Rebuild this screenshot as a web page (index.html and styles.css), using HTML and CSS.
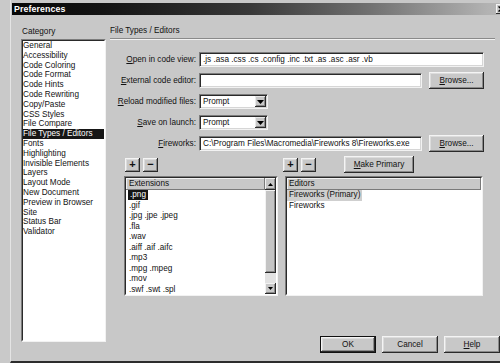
FILE: index.html
```html
<!DOCTYPE html>
<html>
<head>
<meta charset="utf-8">
<title>Preferences</title>
<link rel="stylesheet" href="styles.css">
</head>
<body>
<div class="window">
  <div class="titlebar">
    <span class="title">Preferences</span>
    <span class="close"><svg width="7" height="6" viewBox="0 0 7 6"><path d="M0.5 0.5L6.5 5.5M6.5 0.5L0.5 5.5" stroke="#000" stroke-width="1.4"/></svg></span>
  </div>
  <div class="dialog">
    <div class="left">
      <div class="cat-label">Category</div>
      <div class="sunken cat-box">
        <ul class="sunken-inner cat-list">
          <li>General</li>
          <li>Accessibility</li>
          <li>Code Coloring</li>
          <li>Code Format</li>
          <li>Code Hints</li>
          <li>Code Rewriting</li>
          <li>Copy/Paste</li>
          <li>CSS Styles</li>
          <li>File Compare</li>
          <li class="sel">File Types / Editors</li>
          <li>Fonts</li>
          <li>Highlighting</li>
          <li>Invisible Elements</li>
          <li>Layers</li>
          <li>Layout Mode</li>
          <li>New Document</li>
          <li>Preview in Browser</li>
          <li>Site</li>
          <li>Status Bar</li>
          <li>Validator</li>
        </ul>
      </div>
    </div>
    <div class="right">
      <div class="heading">File Types / Editors</div>
      <div class="form">
        <div class="row">
          <label class="lbl"><u>O</u>pen in code view:</label>
          <div class="field w-full">.js .asa .css .cs .config .inc .txt .as .asc .asr .vb</div>
        </div>
        <div class="row">
          <label class="lbl"><u>E</u>xternal code editor:</label>
          <div class="field w-mid"></div>
          <button class="btn browse"><u>B</u>rowse...</button>
        </div>
        <div class="row">
          <label class="lbl"><u>R</u>eload modified files:</label>
          <div class="field select"><span class="sel-text">Prompt</span><span class="drop"><svg width="7" height="4" viewBox="0 0 7 4"><path d="M0 0H7L3.5 4Z" fill="#000"/></svg></span></div>
        </div>
        <div class="row">
          <label class="lbl"><u>S</u>ave on launch:</label>
          <div class="field select"><span class="sel-text">Prompt</span><span class="drop"><svg width="7" height="4" viewBox="0 0 7 4"><path d="M0 0H7L3.5 4Z" fill="#000"/></svg></span></div>
        </div>
        <div class="row">
          <label class="lbl"><u>F</u>ireworks:</label>
          <div class="field w-mid">C:\Program Files\Macromedia\Fireworks 8\Fireworks.exe</div>
          <button class="btn browse"><u>B</u>rowse...</button>
        </div>
      </div>
      <div class="lists">
        <div class="col ext">
          <div class="toolbar tb-left">
            <button class="btn sq">+</button>
            <button class="btn sq">&minus;</button>
          </div>
          <div class="sunken listbox">
            <div class="sunken-inner lb-inner">
              <div class="lb-main">
                <div class="lb-head">Extensions</div>
                <ul class="lb-items">
                  <li><span class="hl-dark">.png</span></li>
                  <li>.gif</li>
                  <li>.jpg .jpe .jpeg</li>
                  <li>.fla</li>
                  <li>.wav</li>
                  <li>.aiff .aif .aifc</li>
                  <li>.mp3</li>
                  <li>.mpg .mpeg</li>
                  <li>.mov</li>
                  <li>.swf .swt .spl</li>
                </ul>
              </div>
              <div class="scrollbar">
                <div class="sb-btn sb-up"><svg width="5" height="3" viewBox="0 0 5 3"><path d="M0 3H5L2.5 0Z" fill="#000"/></svg></div>
                <div class="sb-thumb"></div>
                <div class="sb-track"></div>
                <div class="sb-btn sb-down"><svg width="5" height="3" viewBox="0 0 5 3"><path d="M0 0H5L2.5 3Z" fill="#000"/></svg></div>
              </div>
            </div>
          </div>
        </div>
        <div class="col ed">
          <div class="toolbar tb-right">
            <button class="btn sq">+</button>
            <button class="btn sq">&minus;</button>
            <button class="btn primary"><u>M</u>ake Primary</button>
          </div>
          <div class="sunken listbox">
            <div class="sunken-inner lb-inner">
              <div class="lb-main">
                <div class="lb-head ed-head">Editors</div>
                <ul class="lb-items ed-items">
                  <li><span class="hl-light">Fireworks (Primary)</span></li>
                  <li>Fireworks</li>
                </ul>
              </div>
            </div>
          </div>
        </div>
      </div>
      <div class="actions">
        <button class="btn act ok">OK</button>
        <button class="btn act">Cancel</button>
        <button class="btn act"><u>H</u>elp</button>
      </div>
    </div>
  </div>
</div>
</body>
</html>
```

FILE: styles.css
```css
* {
  box-sizing: border-box;
  margin: 0;
  padding: 0;
}

html, body {
  width: 500px;
  height: 363px;
  overflow: hidden;
}

body {
  background: #c9c9c9;
  font-family: "Liberation Sans", Arial, sans-serif;
  font-size: 8.2px;
  color: #111;
}

u {
  text-decoration: underline;
  text-underline-offset: 1px;
}

.window {
  margin-left: 10px;
  width: 505px;
  height: 363px;
  padding-top: 3px;
  padding-left: 1px;
  border-left: 1px solid #e4e4e4;
  border-bottom: 2px solid #2c2c2c;
  background: #c8c8c8;
}

.titlebar {
  width: 495px;
  height: 12px;
  display: flex;
  align-items: center;
  padding-left: 2px;
  background: linear-gradient(to right, #060606 0%, #131313 18%, #383838 48%, #707070 72%, #b2b2b2 96%, #b8b8b8 100%);
}

.title {
  color: #fff;
  font-weight: bold;
  font-size: 8.8px;
  letter-spacing: 0.1px;
}

.close {
  margin-left: auto;
  width: 11px;
  height: 10px;
  display: flex;
  align-items: center;
  justify-content: center;
  background: #cacaca;
  box-shadow: inset -1px -1px #303030, inset 1px 1px #f4f4f4;
}

.dialog {
  display: flex;
  align-items: flex-start;
  gap: 4px;
  padding: 9px 0 0 9px;
}

.left {
  width: 85px;
  flex: none;
}

.cat-label {
  line-height: 15px;
  padding-left: 1px;
}

.sunken {
  border: 1px solid;
  border-color: #7c7c7c #f2f2f2 #f2f2f2 #7c7c7c;
  background: #fff;
}

.sunken-inner {
  border: 1px solid;
  border-color: #2a2a2a #d6d6d6 #d6d6d6 #2a2a2a;
  height: 100%;
}

.cat-box {
  height: 303px;
}

.cat-list {
  list-style: none;
  border-right-color: #fff;
  border-bottom-color: #fff;
}

.cat-list li {
  line-height: 9.8px;
  height: 9.8px;
  padding-left: 0;
  white-space: nowrap;
}

.cat-list li.sel {
  background: #161616;
  color: #fff;
}

.right {
  width: 385px;
  flex: none;
}

.heading {
  line-height: 14px;
  border-bottom: 1px solid #8a8a8a;
  box-shadow: 0 1px #f2f2f2;
}

.form {
  margin-top: 10px;
}

.row {
  display: flex;
  align-items: center;
  height: 21px;
}

.lbl {
  width: 86px;
  flex: none;
  text-align: right;
  margin-right: 3px;
  white-space: nowrap;
}

.field {
  height: 15px;
  background: #fff;
  border: 1px solid;
  border-color: #7c7c7c #f2f2f2 #f2f2f2 #7c7c7c;
  box-shadow: inset 1px 1px #2a2a2a, inset -1px -1px #d6d6d6;
  padding-left: 3px;
  line-height: 13px;
  white-space: nowrap;
  overflow: hidden;
}

.w-full {
  width: 285px;
}

.w-mid {
  width: 223px;
}

.btn {
  height: 17px;
  border: none;
  background: #c8c8c8;
  font: inherit;
  color: inherit;
  display: flex;
  align-items: center;
  justify-content: center;
  box-shadow: inset -1px -1px #2a2a2a, inset 1px 1px #f4f4f4, inset -2px -2px #8a8a8a, inset 2px 2px #dcdcdc;
}

.browse {
  width: 55px;
  margin-left: 7px;
}

.select {
  width: 69px;
  display: flex;
  align-items: center;
  padding-left: 3px;
  padding-right: 1px;
}

.sel-text {
  line-height: 13px;
}

.drop {
  margin-left: auto;
  width: 11px;
  height: 11px;
  display: flex;
  align-items: center;
  justify-content: center;
  background: #c8c8c8;
  box-shadow: inset -1px -1px #2a2a2a, inset 1px 1px #e8e8e8, inset -2px -2px #8a8a8a;
}

.lists {
  display: flex;
  gap: 7px;
  padding-left: 14px;
  margin-top: 2px;
}

.col.ext {
  width: 154px;
}

.col.ed {
  width: 198px;
}

.toolbar {
  display: flex;
  align-items: center;
  gap: 3px;
  height: 17px;
  margin-bottom: 3px;
}

.tb-left {
  padding-left: 1px;
}

.tb-right {
  margin-left: -2px;
}

.sq {
  width: 15px;
  height: 14px;
  font-weight: bold;
  font-size: 11px;
  line-height: 1;
}

.primary {
  width: 70px;
  margin-left: 25px;
}

.listbox {
  height: 120px;
}

.lb-inner {
  display: flex;
  border-right-color: #fff;
  border-bottom-color: #fff;
}

.lb-main {
  flex: 1;
  min-width: 0;
  overflow: hidden;
}

.lb-head {
  height: 12px;
  line-height: 11px;
  padding-left: 3px;
  background: #c8c8c8;
  box-shadow: inset -1px -1px #7a7a7a, inset 1px 1px #f2f2f2;
}

.lb-items {
  list-style: none;
}

.lb-items li {
  height: 10.5px;
  line-height: 10.5px;
  padding-left: 3px;
  white-space: nowrap;
}

.hl-dark {
  display: inline-block;
  background: #151515;
  color: #fff;
  padding: 0 2px;
  margin-left: -1px;
  line-height: 10px;
}

.hl-light {
  display: inline-block;
  background: #cfcfcf;
  padding: 0 2px;
  margin-left: -2px;
  line-height: 10.5px;
}

.ed-head {
  padding-left: 2px;
}

.ed-items li {
  padding-left: 2px;
}

.scrollbar {
  width: 11px;
  flex: none;
  display: flex;
  flex-direction: column;
}

.sb-btn {
  display: flex;
  align-items: center;
  justify-content: center;
  background: #c8c8c8;
  box-shadow: inset -1px -1px #2a2a2a, inset 1px 1px #f2f2f2, inset -2px -2px #8a8a8a;
}

.sb-up {
  height: 12px;
}

.sb-down {
  height: 11px;
}

.sb-thumb {
  height: 83px;
  background: #c4c4c4;
  box-shadow: inset -1px -1px #2a2a2a, inset 1px 1px #f2f2f2, inset -2px -2px #8a8a8a;
}

.sb-track {
  flex: 1;
  background: #e2e2e2;
}

.actions {
  display: flex;
  gap: 6px;
  margin-top: 40px;
  margin-left: 210px;
}

.act {
  width: 56px;
  flex: none;
}

.ok {
  border: 1px solid #111;
}
```
